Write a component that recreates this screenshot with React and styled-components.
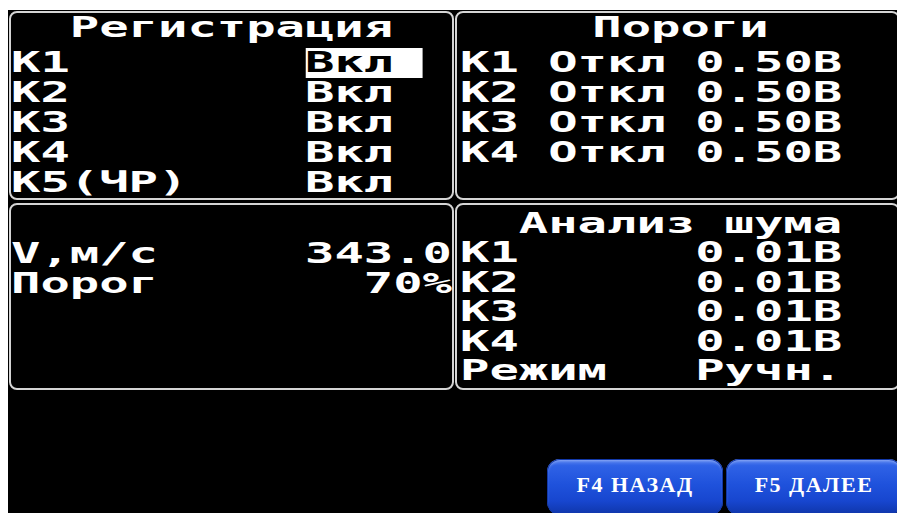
import React from "react";
import styled, { createGlobalStyle } from "styled-components";

// LCD text grid: 15 characters per panel, stretched like the device font
const CHAR_STRETCH = 1.744;

const registration = [
  ["К1", "Вкл"],
  ["К2", "Вкл"],
  ["К3", "Вкл"],
  ["К4", "Вкл"],
  ["К5(ЧР)", "Вкл"],
];

const thresholds = [
  ["К1", "Откл", "0.50В"],
  ["К2", "Откл", "0.50В"],
  ["К3", "Откл", "0.50В"],
  ["К4", "Откл", "0.50В"],
];

const noise = [
  ["К1", "0.01В"],
  ["К2", "0.01В"],
  ["К3", "0.01В"],
  ["К4", "0.01В"],
  ["Режим", "Ручн."],
];

const speed = [
  ["V,м/с", "343.0"],
  ["Порог", "70%"],
];

const App = () => {
  return (
    <>
      <GlobalStyle />
      <Screen>
        <Panels>
          <Panel>
            <TextGrid>
              <Title>Регистрация</Title>
              {registration.map(([label, value], i) => (
                <Line key={label}>
                  {label.padEnd(10)}
                  {i === 0 ? <Cursor>{value.padEnd(4)}</Cursor> : value}
                </Line>
              ))}
            </TextGrid>
          </Panel>

          <Panel $inset={3}>
            <TextGrid>
              <Title>Пороги</Title>
              {thresholds.map(([ch, state, level]) => (
                <Line key={ch}>{`${ch} ${state} ${level}`}</Line>
              ))}
            </TextGrid>
          </Panel>

          <Panel $top={4}>
            <TextGrid>
              <Title $gap={0}> </Title>
              {speed.map(([label, value]) => (
                <Line key={label}>
                  {label + value.padStart(15 - label.length)}
                </Line>
              ))}
            </TextGrid>
          </Panel>

          <Panel $inset={3} $top={4}>
            <TextGrid>
              <Title $gap={0} $pitch={29}>
                Анализ шума
              </Title>
              {noise.map(([label, value]) => (
                <Line key={label} $pitch={29.6}>
                  {label.padEnd(8) + value}
                </Line>
              ))}
            </TextGrid>
          </Panel>
        </Panels>

        <Footer>
          <SoftKey>F4 НАЗАД</SoftKey>
          <SoftKey>F5 ДАЛЕЕ</SoftKey>
        </Footer>
      </Screen>
    </>
  );
};

export default App;

const GlobalStyle = createGlobalStyle`
  html, body {
    margin: 0;
    padding: 0;
    background: #ffffff;
    overflow: hidden;
  }
`;

const Screen = styled.div`
  margin: 10px 0 0 8px;
  width: 894px;
  padding: 1px 0 0 1px;
  box-sizing: border-box;
  background: #000000;
  display: flex;
  flex-direction: column;
`;

const Panels = styled.div`
  display: grid;
  grid-template-columns: 445px 445px;
  grid-template-rows: 189px 187px;
  column-gap: 1px;
  row-gap: 3px;
`;

const Panel = styled.div`
  box-sizing: border-box;
  border: 2px solid #d4d4d4;
  border-radius: 8px;
  padding: ${(p) => p.$top || 0}px 0 0 ${(p) => p.$inset || 0}px;
  overflow: hidden;
`;

const TextGrid = styled.div`
  width: 15ch;
  font-family: "DejaVu Sans Mono", "Liberation Mono", monospace;
  font-weight: bold;
  font-size: 28px;
  color: #ffffff;
  white-space: pre;
  transform: scaleX(${CHAR_STRETCH});
  transform-origin: 0 0;
  font-variant-numeric: slashed-zero;
`;

const Title = styled.div`
  height: ${(p) => p.$pitch || 30}px;
  line-height: ${(p) => p.$pitch || 30}px;
  text-align: center;
  margin-bottom: ${(p) => (p.$gap === undefined ? 5 : p.$gap)}px;
`;

const Line = styled.div`
  height: ${(p) => p.$pitch || 30}px;
  line-height: ${(p) => p.$pitch || 30}px;
`;

const Cursor = styled.span`
  display: inline-block;
  height: 30px;
  line-height: 30px;
  vertical-align: top;
  background: #ffffff;
  color: #000000;
`;

const Footer = styled.div`
  display: flex;
  justify-content: flex-end;
  gap: 3px;
  margin-top: 69px;
`;

const SoftKey = styled.div`
  width: 176px;
  height: 56px;
  box-sizing: border-box;
  border-radius: 13px;
  display: flex;
  align-items: center;
  justify-content: center;
  padding-bottom: 4px;
  background: linear-gradient(
    180deg,
    #5b86f2 0%,
    #2f62e6 12%,
    #1f52dc 45%,
    #1746cf 75%,
    #0f35a8 100%
  );
  box-shadow: inset 0 0 0 1px #1238a8, inset 0 2px 3px rgba(255, 255, 255, 0.35);
  font-family: "Liberation Serif", "DejaVu Serif", serif;
  font-weight: bold;
  font-size: 22px;
  color: #ffffff;
  letter-spacing: 1.5px;
`;
